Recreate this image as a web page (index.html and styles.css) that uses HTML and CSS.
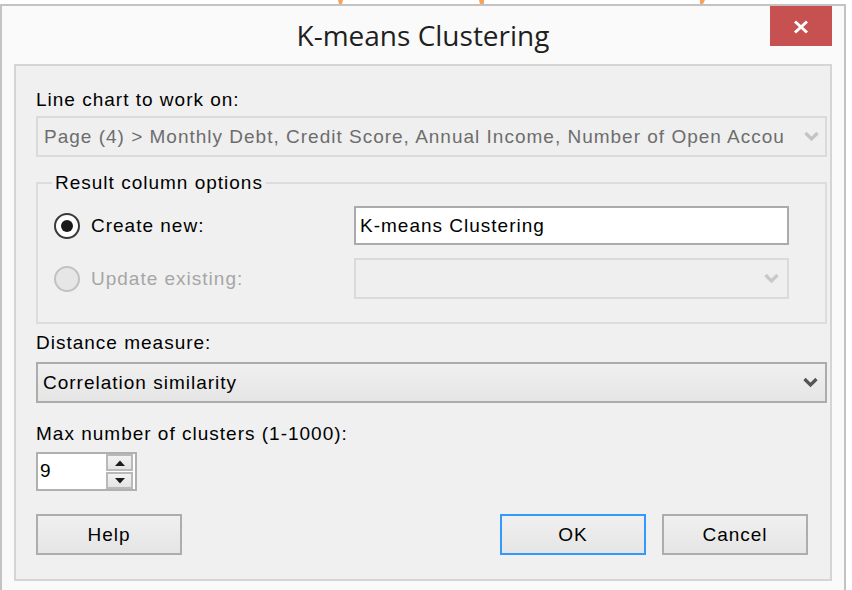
FILE: index.html
```html
<!DOCTYPE html>
<html lang="en">
<head>
<meta charset="utf-8">
<title>K-means Clustering</title>
<link rel="stylesheet" href="styles.css">
</head>
<body>
<svg class="bgstrip" width="852" height="4" viewBox="0 0 852 4">
  <path d="M338 0 L343 0 L342 4 L339 4 Z" fill="#f6a35e"/>
  <path d="M479 0 L484 0 L484 4 L480 4 Z" fill="#f6a35e"/>
  <path d="M700 0 L705 0 L703 4 L700 4 Z" fill="#f6a35e"/>
</svg>
<div class="window">
  <div class="titlebar">
    <div class="spacer"></div>
    <h1 class="title">K-means Clustering</h1>
    <div class="close" aria-label="Close">
      <svg width="16" height="14" viewBox="0 0 16 14"><path d="M2 1.5 L14 12.5 M14 1.5 L2 12.5" stroke="#ffffff" stroke-width="3" fill="none"/></svg>
    </div>
  </div>
  <div class="client">
    <div class="label first">Line chart to work on:</div>
    <div class="combo disabled wide">
      <span class="ctext">Page (4) &gt; Monthly Debt, Credit Score, Annual Income, Number of Open Accou</span>
      <svg class="chev" width="15" height="11" viewBox="0 0 15 11"><path d="M1.5 2 L7.5 8 L13.5 2" stroke="#c4c4c4" stroke-width="3.2" fill="none"/></svg>
    </div>
    <fieldset class="group">
      <legend>Result column options</legend>
      <div class="grow">
        <div class="opt"><span class="radio checked"><span class="dot"></span></span><span class="otext">Create new:</span></div>
        <div class="textbox">K-means Clustering</div>
      </div>
      <div class="grow second">
        <div class="opt"><span class="radio off"></span><span class="otext dim">Update existing:</span></div>
        <div class="combo disabled small">
          <span class="ctext"></span>
          <svg class="chev" width="15" height="11" viewBox="0 0 15 11"><path d="M1.5 2 L7.5 8 L13.5 2" stroke="#c8c8c8" stroke-width="3.2" fill="none"/></svg>
        </div>
      </div>
    </fieldset>
    <div class="label dist">Distance measure:</div>
    <div class="combo enabled wide">
      <span class="ctext">Correlation similarity</span>
      <svg class="chev" width="15" height="11" viewBox="0 0 15 11"><path d="M1.5 2 L7.5 8 L13.5 2" stroke="#555555" stroke-width="3.2" fill="none"/></svg>
    </div>
    <div class="label maxl">Max number of clusters (1-1000):</div>
    <div class="spin">
      <span class="val">9</span>
      <span class="sbtns">
        <span class="sbtn"><svg width="10" height="6" viewBox="0 0 10 6"><path d="M0 6 L5 0.5 L10 6 Z" fill="#1a1a1a"/></svg></span>
        <span class="sbtn"><svg width="10" height="6" viewBox="0 0 10 6"><path d="M0 0 L10 0 L5 5.5 Z" fill="#1a1a1a"/></svg></span>
      </span>
    </div>
    <div class="buttons">
      <button class="btn">Help</button>
      <div class="right">
        <button class="btn default">OK</button>
        <button class="btn">Cancel</button>
      </div>
    </div>
  </div>
</div>
</body>
</html>
```
FILE: styles.css
```css
html, body {
  margin: 0;
  padding: 0;
}
body {
  width: 852px;
  height: 590px;
  overflow: hidden;
  background: #ffffff;
  font-family: "Liberation Sans", Arial, sans-serif;
  font-size: 19px;
  letter-spacing: 1px;
  color: #000000;
}
.bgstrip {
  display: block;
}
.window {
  width: 842px;
  height: 586px;
  border: 2px solid #c3c3c3;
  border-bottom: none;
  background: #fafafa;
  overflow: hidden;
}
.titlebar {
  height: 58px;
  display: grid;
  grid-template-columns: 1fr auto 1fr;
  align-items: start;
  padding: 0 12px;
}
.title {
  margin: 10px 0 0 0;
  font-family: "Open Sans", "Noto Sans", sans-serif;
  font-weight: 400;
  font-size: 28px;
  letter-spacing: 0;
  line-height: 38px;
  color: #1f1f1f;
  white-space: nowrap;
}
.close {
  justify-self: end;
  width: 62px;
  height: 40px;
  background: #c75050;
  display: flex;
  align-items: center;
  justify-content: center;
}
.close svg {
  display: block;
  margin-top: 1px;
}
.client {
  margin: 0 12px;
  border: 2px solid #d5d5d5;
  background: #f0f0f0;
  padding: 23px 3px 24px 20px;
  display: flex;
  flex-direction: column;
}
.label {
  line-height: 22px;
  height: 22px;
  white-space: nowrap;
}
.label.first { margin-bottom: 5px; }
.label.dist { margin-top: 8px; margin-bottom: 8px; }
.label.maxl { margin-top: 20px; margin-bottom: 7px; }

.combo {
  box-sizing: border-box;
  height: 41px;
  border: 2px solid #dadada;
  display: flex;
  align-items: center;
  padding: 0 6px 0 6px;
  gap: 8px;
}
.combo.disabled {
  background: #efefef;
  color: #6d6d6d;
}
.combo.enabled {
  border-color: #acacac;
  background: linear-gradient(#f0f0f0, #e5e5e5);
  color: #000000;
  padding-left: 5px;
  padding-right: 7px;
}
.ctext {
  flex: 1;
  white-space: nowrap;
  overflow: hidden;
  line-height: 22px;
}
.chev {
  display: block;
  flex: none;
}
.group {
  margin: 15px 0 0 0;
  border: 2px solid #dcdcdc;
  padding: 12px 36px 23px 16px;
  min-width: 0;
}
.group legend {
  margin-left: -2px;
  padding: 0 3px;
  line-height: 22px;
  height: 22px;
}
.grow {
  display: grid;
  grid-template-columns: 300px 1fr;
  align-items: center;
}
.grow.second {
  margin-top: 13px;
}
.opt {
  display: flex;
  align-items: center;
  gap: 11px;
}
.radio {
  box-sizing: border-box;
  width: 26px;
  height: 26px;
  border-radius: 50%;
  border: 2px solid #3a3a3a;
  background: #ffffff;
  display: flex;
  align-items: center;
  justify-content: center;
  flex: none;
}
.radio .dot {
  width: 12px;
  height: 12px;
  border-radius: 50%;
  background: #1a1a1a;
}
.radio.off {
  border-color: #c2c2c2;
  background: #e6e6e6;
}
.otext {
  line-height: 22px;
  white-space: nowrap;
}
.otext.dim {
  color: #a6a6a6;
}
.textbox {
  box-sizing: border-box;
  height: 39px;
  border: 2px solid #ababab;
  background: #ffffff;
  padding: 0 4px;
  display: flex;
  align-items: center;
  line-height: 22px;
  white-space: nowrap;
}
.combo.small {
  height: 41px;
  padding-right: 8px;
}
.spin {
  box-sizing: border-box;
  width: 101px;
  height: 39px;
  border: 2px solid #b0b0b0;
  background: #ffffff;
  display: flex;
}
.spin .val {
  flex: 1;
  padding-left: 2px;
  line-height: 33px;
}
.sbtns {
  width: 27px;
  margin: 0 2px 0 0;
  display: flex;
  flex-direction: column;
  gap: 1px;
}
.sbtn {
  flex: 1;
  box-sizing: border-box;
  border: 2px solid #b9b9b9;
  background: linear-gradient(#f2f2f2, #e4e4e4);
  display: flex;
  align-items: center;
  justify-content: center;
}
.sbtn svg {
  display: block;
}
.buttons {
  margin-top: 23px;
  display: flex;
  justify-content: space-between;
  padding-right: 19px;
}
.right {
  display: flex;
  gap: 16px;
}
.btn {
  box-sizing: border-box;
  width: 146px;
  height: 41px;
  margin: 0;
  padding: 0;
  border: 2px solid #adadad;
  border-radius: 0;
  background: linear-gradient(#f0f0f0, #e5e5e5);
  font-family: "Liberation Sans", Arial, sans-serif;
  font-size: 19px;
  letter-spacing: 1px;
  color: #000000;
}
.btn.default {
  border-color: #3399ff;
}
```
